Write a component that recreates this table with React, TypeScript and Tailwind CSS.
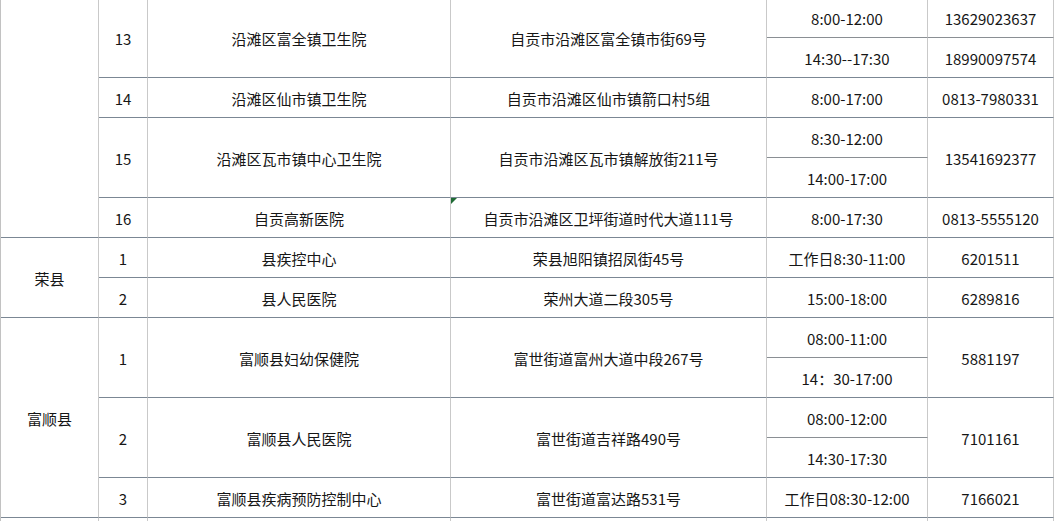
const cell =
  "flex items-center justify-center pt-[3px] border-b border-r border-b-[#7b8794] border-r-[#c9c9c9] text-[15px] text-[#161616] whitespace-nowrap";

const sub =
  "flex items-center justify-center pt-[3px] border-b border-r border-b-[#8a8f94] border-r-[#c9c9c9] text-[15px] text-[#161616] whitespace-nowrap";

function Triangle() {
  return (
    <span className="absolute left-0 top-0 h-0 w-0 border-t-[6px] border-r-[6px] border-t-[#1f6b34] border-r-transparent" />
  );
}

export default function App() {
  return (
    <div
      className="h-[521px] w-[1057px] overflow-hidden bg-white"
      style={{ fontFamily: '"Noto Sans CJK SC", "Noto Sans", sans-serif' }}
    >
      <div className="-mt-[2px] grid grid-cols-[98px_49px_303px_316px_161px_126px_1fr] grid-rows-[repeat(14,40px)] border-l border-l-[#c2c2c2]">
        {/* 沿滩区 (continues above) */}
        <div className={`${cell} col-start-1 row-start-1 row-span-6`} />

        {/* 13 */}
        <div className={`${cell} col-start-2 row-start-1 row-span-2`}>13</div>
        <div className={`${cell} col-start-3 row-start-1 row-span-2`}>沿滩区富全镇卫生院</div>
        <div className={`${cell} col-start-4 row-start-1 row-span-2`}>自贡市沿滩区富全镇市街69号</div>
        <div className={`${sub} col-start-5 row-start-1`}>8:00-12:00</div>
        <div className={`${cell} col-start-5 row-start-2`}>14:30--17:30</div>
        <div className={`${sub} col-start-6 row-start-1 border-r-[#aab6c2]`}>13629023637</div>
        <div className={`${cell} col-start-6 row-start-2 border-r-[#aab6c2]`}>18990097574</div>

        {/* 14 */}
        <div className={`${cell} col-start-2 row-start-3`}>14</div>
        <div className={`${cell} col-start-3 row-start-3`}>沿滩区仙市镇卫生院</div>
        <div className={`${cell} col-start-4 row-start-3`}>自贡市沿滩区仙市镇箭口村5组</div>
        <div className={`${cell} col-start-5 row-start-3`}>8:00-17:00</div>
        <div className={`${cell} col-start-6 row-start-3 border-r-[#aab6c2]`}>0813-7980331</div>

        {/* 15 */}
        <div className={`${cell} col-start-2 row-start-4 row-span-2`}>15</div>
        <div className={`${cell} col-start-3 row-start-4 row-span-2`}>沿滩区瓦市镇中心卫生院</div>
        <div className={`${cell} col-start-4 row-start-4 row-span-2`}>自贡市沿滩区瓦市镇解放街211号</div>
        <div className={`${sub} col-start-5 row-start-4`}>8:30-12:00</div>
        <div className={`${cell} col-start-5 row-start-5`}>14:00-17:00</div>
        <div className={`${cell} col-start-6 row-start-4 row-span-2 border-r-[#aab6c2]`}>13541692377</div>

        {/* 16 */}
        <div className={`${cell} col-start-2 row-start-6`}>16</div>
        <div className={`${cell} col-start-3 row-start-6`}>自贡高新医院</div>
        <div className={`${cell} relative col-start-4 row-start-6`}>
          <Triangle />
          自贡市沿滩区卫坪街道时代大道111号
        </div>
        <div className={`${cell} col-start-5 row-start-6`}>8:00-17:30</div>
        <div className={`${cell} col-start-6 row-start-6 border-r-[#aab6c2]`}>0813-5555120</div>

        {/* 荣县 */}
        <div className={`${cell} col-start-1 row-start-7 row-span-2`}>荣县</div>
        <div className={`${cell} col-start-2 row-start-7`}>1</div>
        <div className={`${cell} col-start-3 row-start-7`}>县疾控中心</div>
        <div className={`${cell} col-start-4 row-start-7`}>荣县旭阳镇招凤街45号</div>
        <div className={`${cell} col-start-5 row-start-7`}>工作日8:30-11:00</div>
        <div className={`${cell} col-start-6 row-start-7 border-r-[#aab6c2]`}>6201511</div>

        <div className={`${cell} col-start-2 row-start-8`}>2</div>
        <div className={`${cell} col-start-3 row-start-8`}>县人民医院</div>
        <div className={`${cell} col-start-4 row-start-8`}>荣州大道二段305号</div>
        <div className={`${cell} col-start-5 row-start-8`}>15:00-18:00</div>
        <div className={`${cell} col-start-6 row-start-8 border-r-[#aab6c2]`}>6289816</div>

        {/* 富顺县 */}
        <div className={`${cell} col-start-1 row-start-9 row-span-5`}>富顺县</div>
        <div className={`${cell} col-start-2 row-start-9 row-span-2`}>1</div>
        <div className={`${cell} col-start-3 row-start-9 row-span-2`}>富顺县妇幼保健院</div>
        <div className={`${cell} col-start-4 row-start-9 row-span-2`}>富世街道富州大道中段267号</div>
        <div className={`${sub} col-start-5 row-start-9`}>08:00-11:00</div>
        <div className={`${cell} col-start-5 row-start-10`}>14：30-17:00</div>
        <div className={`${cell} col-start-6 row-start-9 row-span-2 border-r-[#aab6c2]`}>5881197</div>

        <div className={`${cell} col-start-2 row-start-11 row-span-2`}>2</div>
        <div className={`${cell} col-start-3 row-start-11 row-span-2`}>富顺县人民医院</div>
        <div className={`${cell} col-start-4 row-start-11 row-span-2`}>富世街道吉祥路490号</div>
        <div className={`${sub} col-start-5 row-start-11`}>08:00-12:00</div>
        <div className={`${cell} col-start-5 row-start-12`}>14:30-17:30</div>
        <div className={`${cell} col-start-6 row-start-11 row-span-2 border-r-[#aab6c2]`}>7101161</div>

        <div className={`${cell} col-start-2 row-start-13`}>3</div>
        <div className={`${cell} col-start-3 row-start-13`}>富顺县疾病预防控制中心</div>
        <div className={`${cell} col-start-4 row-start-13`}>富世街道富达路531号</div>
        <div className={`${cell} col-start-5 row-start-13`}>工作日08:30-12:00</div>
        <div className={`${cell} col-start-6 row-start-13 border-r-[#aab6c2]`}>7166021</div>

        {/* next row, cut off */}
        <div className={`${cell} col-start-1 row-start-14`} />
        <div className={`${cell} col-start-2 row-start-14`} />
        <div className={`${cell} col-start-3 row-start-14`} />
        <div className={`${cell} col-start-4 row-start-14`} />
        <div className={`${cell} col-start-5 row-start-14`} />
        <div className={`${cell} col-start-6 row-start-14 border-r-[#aab6c2]`} />
      </div>
    </div>
  );
}
